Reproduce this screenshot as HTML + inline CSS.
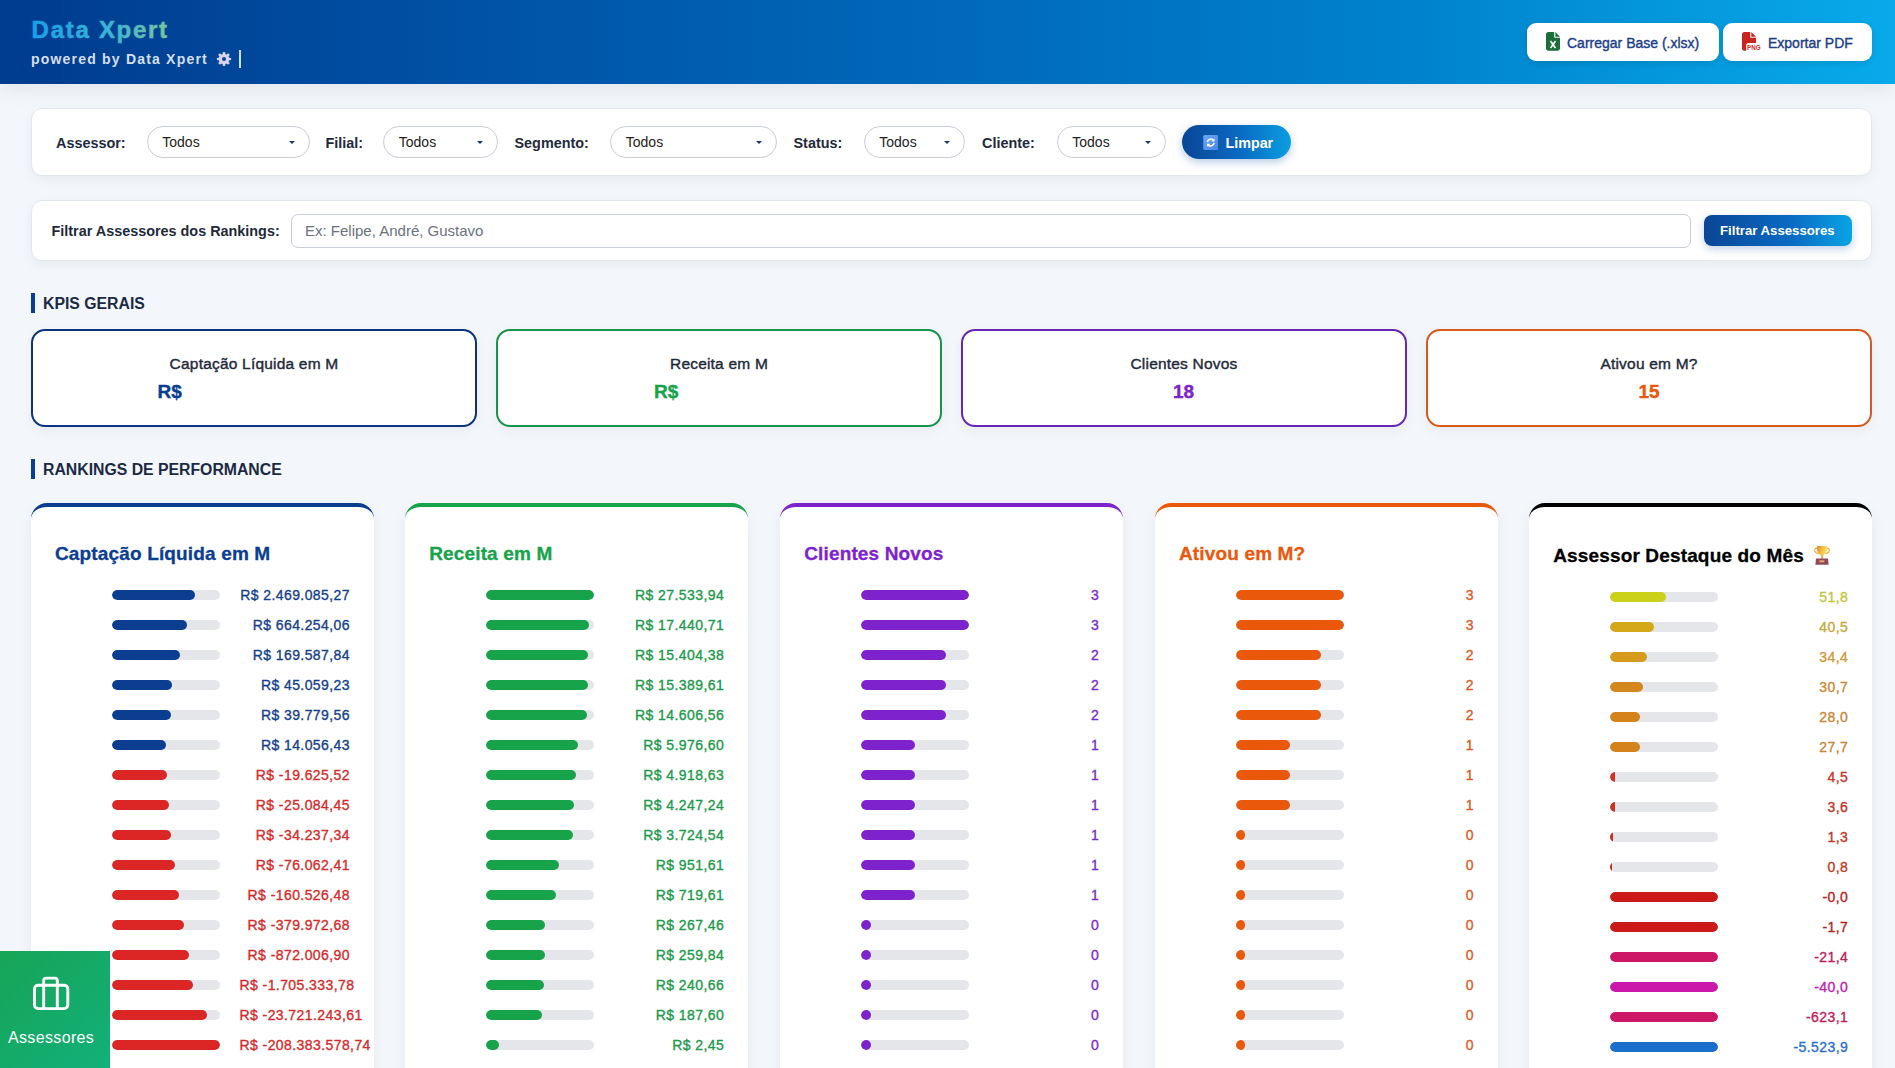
<!DOCTYPE html>
<html lang="pt-BR"><head><meta charset="utf-8"><title>Data Xpert</title>
<style>
*{box-sizing:border-box;margin:0;padding:0}
html,body{width:1895px;height:1068px;overflow:hidden}
body{font-family:"Liberation Sans", sans-serif;background:#f3f6fa;position:relative;color:#1f2937}
.abs{position:absolute}
.header{position:absolute;left:0;top:0;width:1895px;height:84px;
  background:linear-gradient(90deg,#003b8e 0%,#0052a6 25%,#0069b9 50%,#0083cc 75%,#08aaea 100%);
  box-shadow:0 3px 22px rgba(20,30,60,.09)}
.brand{position:absolute;left:31px;top:17px;font-size:24px;font-weight:bold;letter-spacing:1.8px;line-height:28px;
  background:linear-gradient(90deg,#1aa0e6 0%,#37b3d6 55%,#79c29a 100%);-webkit-background-clip:text;background-clip:text;color:transparent;white-space:nowrap}
.powered{position:absolute;left:31px;top:51px;font-size:14px;font-weight:bold;letter-spacing:1.2px;line-height:17px;color:#d5def0;white-space:nowrap}
.hbtn{position:absolute;top:23px;height:38px;background:#fff;border-radius:9px;box-shadow:0 2px 6px rgba(0,0,0,.12)}
.hbtn span{position:absolute;top:12px;font-size:14px;line-height:16px;color:#1e3f8a;-webkit-text-stroke:0.4px #1e3f8a;white-space:nowrap}
.card{position:absolute;background:#fff;border:1px solid #e3e7ee;border-radius:11px;box-shadow:0 4px 12px rgba(15,30,60,.05)}
.lbl{position:absolute;font-size:14.4px;font-weight:bold;color:#1f2a3a;line-height:16px;white-space:nowrap}
.sel{position:absolute;top:126px;height:32px;border:1px solid #c9ced6;border-radius:16px;background:#fff}
.sel span{position:absolute;top:7px;font-size:14px;line-height:16px;color:#222;white-space:nowrap}
.sel i{position:absolute;top:13.5px;width:0;height:0;border-left:3px solid transparent;border-right:3px solid transparent;border-top:3.5px solid #17356e}
.limpar{position:absolute;left:1182px;top:125px;width:109px;height:34px;border-radius:17px;
  background:linear-gradient(90deg,#0a4596 0%,#0a6cc4 55%,#0a9ee0 100%);box-shadow:0 3px 8px rgba(10,80,170,.3)}
.sec{position:absolute;left:31px;width:4px;height:20px;background:#0b3d91}
.sectitle{position:absolute;left:43px;font-size:15.8px;font-weight:bold;color:#1b2a44;line-height:18px;white-space:nowrap}
.kpi{position:absolute;top:329px;width:446px;height:98px;background:#fff;border:2px solid;border-radius:14px;box-shadow:0 4px 12px rgba(15,30,60,.05)}
.kpi .t{position:absolute;top:24px;left:0;width:100%;text-align:center;font-size:15.5px;letter-spacing:0.2px;line-height:18px;color:#1f2a3a;white-space:nowrap;-webkit-text-stroke:0.4px #1f2a3a}
.kpi .v{position:absolute;top:49.8px;font-size:19px;font-weight:bold;line-height:22px;white-space:nowrap;-webkit-text-stroke:0.4px currentColor}
.rc{position:absolute;top:503px;width:343px;height:600px;background:#fff;border-radius:16px;border-top:4px solid;box-shadow:0 4px 14px rgba(15,30,60,.06)}
.rc .tt{position:absolute;left:24px;top:35.5px;letter-spacing:0.15px;-webkit-text-stroke:0.3px currentColor;font-size:19px;font-weight:bold;line-height:22px;white-space:nowrap}
.row{position:absolute;left:0;width:343px;height:20px}
.track{position:absolute;left:81px;top:0;width:108px;height:10px;border-radius:5px;background:#e4e6ea;overflow:hidden}
.fill{position:absolute;left:0;top:0;height:10px;border-radius:5px}
.val{position:absolute;right:24px;top:-3px;font-size:14px;line-height:16px;letter-spacing:0.42px;white-space:nowrap;text-align:right;-webkit-text-stroke:0.35px currentColor}
.widget{position:absolute;left:0;top:951px;width:110px;height:117px;background:linear-gradient(135deg,#17a456 0%,#12b07a 100%)}
</style></head><body>
<div class="header">
<svg class="abs" style="left:30px;top:14px;overflow:visible" width="145" height="32" viewBox="0 0 145 32"><defs><linearGradient id="brg" gradientUnits="userSpaceOnUse" x1="2" y1="0" x2="138" y2="0"><stop offset="0" stop-color="#18a0e8"/><stop offset="0.55" stop-color="#38b4d6"/><stop offset="1" stop-color="#7cc49a"/></linearGradient></defs><text x="1.6" y="24.2" font-family="Liberation Sans" font-weight="bold" font-size="24" letter-spacing="1.72" fill="url(#brg)" stroke="url(#brg)" stroke-width="0.5">Data Xpert</text></svg>
<div class="powered">powered by Data Xpert</div>
<svg class="abs" style="left:215.8px;top:50.8px" width="16" height="16" viewBox="0 0 16 16"><defs><mask id="gm"><rect width="16" height="16" fill="#fff"/><circle cx="8" cy="8" r="2" fill="#000"/></mask></defs><g fill="#d9d2ee" mask="url(#gm)"><circle cx="8" cy="8" r="5.3"/><rect x="6.7" y="0.9" width="2.6" height="3.4" rx="0.8" transform="rotate(0 8 8)"/><rect x="6.7" y="0.9" width="2.6" height="3.4" rx="0.8" transform="rotate(45 8 8)"/><rect x="6.7" y="0.9" width="2.6" height="3.4" rx="0.8" transform="rotate(90 8 8)"/><rect x="6.7" y="0.9" width="2.6" height="3.4" rx="0.8" transform="rotate(135 8 8)"/><rect x="6.7" y="0.9" width="2.6" height="3.4" rx="0.8" transform="rotate(180 8 8)"/><rect x="6.7" y="0.9" width="2.6" height="3.4" rx="0.8" transform="rotate(225 8 8)"/><rect x="6.7" y="0.9" width="2.6" height="3.4" rx="0.8" transform="rotate(270 8 8)"/><rect x="6.7" y="0.9" width="2.6" height="3.4" rx="0.8" transform="rotate(315 8 8)"/></g></svg>
<div class="abs" style="left:239.2px;top:50px;width:2.2px;height:18px;background:#cfe0f8"></div>
<div class="hbtn" style="left:1527px;width:192px">
<svg class="abs" style="left:19px;top:9px" width="14" height="18.7" viewBox="0 0 384 512"><path fill="#1d6f3a" d="M0 64C0 28.7 28.7 0 64 0H224V128c0 17.7 14.3 32 32 32H384V448c0 35.3-28.7 64-64 64H64c-35.3 0-64-28.7-64-64V64zM384 128H256V0L384 128z"/><path fill="#fff" d="M155.7 250.2L192 302.1l36.3-51.9c7.6-10.9 22.6-13.5 33.4-5.9s13.5 22.6 5.9 33.4L221.3 344l46.4 66.2c7.6 10.9 5 25.8-5.9 33.4s-25.8 5-33.4-5.9L192 385.8l-36.3 51.9c-7.6 10.9-22.6 13.5-33.4 5.9s-13.5-22.6-5.9-33.4L162.7 344l-46.4-66.2c-7.6-10.9-5-25.8 5.9-33.4s25.8-5 33.4 5.9z"/></svg>
<span style="left:40px">Carregar Base (.xlsx)</span></div>
<div class="hbtn" style="left:1723px;width:149px">
<svg class="abs" style="left:19px;top:9px" width="18.7" height="18.7" viewBox="0 0 512 512"><path fill="#c9241e" d="M0 64C0 28.7 28.7 0 64 0H224V128c0 17.7 14.3 32 32 32H384V304H176c-35.3 0-64 28.7-64 64V512H64c-35.3 0-64-28.7-64-64V64zM384 128H256V0L384 128z"/><text x="140" y="505" font-family="Liberation Sans" font-weight="bold" font-size="190" fill="#c9241e" textLength="370" lengthAdjust="spacingAndGlyphs">PNG</text></svg>
<span style="left:45px">Exportar PDF</span></div>
</div>
<div class="card" style="left:31px;top:108px;width:1841px;height:68px"></div>
<div class="lbl" style="left:56px;top:135px">Assessor:</div>
<div class="lbl" style="left:325.5px;top:135px">Filial:</div>
<div class="lbl" style="left:514.5px;top:135px">Segmento:</div>
<div class="lbl" style="left:793.5px;top:135px">Status:</div>
<div class="lbl" style="left:982px;top:135px">Cliente:</div>
<div class="sel" style="left:146.5px;width:163px"><span style="left:14.8px">Todos</span><i style="left:141px"></i></div>
<div class="sel" style="left:383px;width:114.5px"><span style="left:14.8px">Todos</span><i style="left:92.5px"></i></div>
<div class="sel" style="left:610px;width:166.5px"><span style="left:14.8px">Todos</span><i style="left:144.5px"></i></div>
<div class="sel" style="left:863.5px;width:101.5px"><span style="left:14.8px">Todos</span><i style="left:79.5px"></i></div>
<div class="sel" style="left:1056.5px;width:109px"><span style="left:14.8px">Todos</span><i style="left:87px"></i></div>
<div class="limpar">
<svg class="abs" style="left:20.5px;top:10px" width="15.5" height="15" viewBox="0 0 16 16"><defs><linearGradient id="lg1" x1="0" y1="0" x2="1" y2="1"><stop offset="0" stop-color="#6aa8f4"/><stop offset="1" stop-color="#4a86e4"/></linearGradient></defs><rect x="0" y="0" width="16" height="16" rx="1.6" fill="url(#lg1)"/><path d="M4.4 7.6A3.7 3.7 0 0 1 11.1 5.9" stroke="#fff" stroke-width="1.7" fill="none"/><path d="M12 3.4v3.4H8.6z" fill="#fff"/><path d="M11.6 8.4A3.7 3.7 0 0 1 4.9 10.1" stroke="#fff" stroke-width="1.7" fill="none"/><path d="M4 12.6V9.2H7.4z" fill="#fff"/></svg>
<div class="abs" style="left:43.5px;top:9.5px;font-size:14.3px;font-weight:bold;color:#fff;line-height:17px">Limpar</div>
</div>
<div class="card" style="left:31px;top:200px;width:1841px;height:61px"></div>
<div class="lbl" style="left:51.5px;top:223px">Filtrar Assessores dos Rankings:</div>
<div class="abs" style="left:291px;top:214px;width:1400px;height:34px;border:1px solid #c9ced6;border-radius:7px;background:#fff"></div>
<div class="abs" style="left:305px;top:222px;font-size:15px;line-height:17px;color:#6b7280;white-space:nowrap">Ex: Felipe, André, Gustavo</div>
<div class="abs" style="left:1704px;top:215px;width:148px;height:31px;border-radius:8px;background:linear-gradient(90deg,#0a4596 0%,#0a6cc4 60%,#0aa3e4 100%);box-shadow:0 3px 8px rgba(10,80,170,.25)"></div>
<div class="abs" style="left:1720px;top:223px;font-size:13.2px;font-weight:bold;line-height:15px;color:#fff;white-space:nowrap">Filtrar Assessores</div>
<div class="sec" style="top:293px"></div><div class="sectitle" style="top:294.5px">KPIS GERAIS</div>
<div class="sec" style="top:459px"></div><div class="sectitle" style="top:460.5px">RANKINGS DE PERFORMANCE</div>
<div class="kpi" style="left:31px;border-color:#0a3380"><div class="t">Captação Líquida em M</div><div class="v" style="left:124.5px;color:#0b3d91">R$</div></div>
<div class="kpi" style="left:496px;border-color:#17944a"><div class="t">Receita em M</div><div class="v" style="left:156px;color:#16a34a">R$</div></div>
<div class="kpi" style="left:961px;border-color:#6a26b0"><div class="t">Clientes Novos</div><div class="v" style="left:210px;color:#7e22ce">18</div></div>
<div class="kpi" style="left:1426px;border-color:#d65a1c"><div class="t">Ativou em M?</div><div class="v" style="left:210.5px;color:#ea580c">15</div></div>
<div class="rc" style="left:31px;border-top-color:#0b3d91">
<div class="tt" style="color:#0b3d91">Captação Líquida em M</div>
<div class="row" style="top:83px"><div class="track"><div class="fill" style="width:83px;background:#0b3d91;border-radius:5px"></div></div><div class="val" style="color:#163f8c;">R$ 2.469.085,27</div></div>
<div class="row" style="top:113px"><div class="track"><div class="fill" style="width:75px;background:#0b3d91;border-radius:5px"></div></div><div class="val" style="color:#163f8c;">R$ 664.254,06</div></div>
<div class="row" style="top:143px"><div class="track"><div class="fill" style="width:68px;background:#0b3d91;border-radius:5px"></div></div><div class="val" style="color:#163f8c;">R$ 169.587,84</div></div>
<div class="row" style="top:173px"><div class="track"><div class="fill" style="width:60px;background:#0b3d91;border-radius:5px"></div></div><div class="val" style="color:#163f8c;">R$ 45.059,23</div></div>
<div class="row" style="top:203px"><div class="track"><div class="fill" style="width:59px;background:#0b3d91;border-radius:5px"></div></div><div class="val" style="color:#163f8c;">R$ 39.779,56</div></div>
<div class="row" style="top:233px"><div class="track"><div class="fill" style="width:54px;background:#0b3d91;border-radius:5px"></div></div><div class="val" style="color:#163f8c;">R$ 14.056,43</div></div>
<div class="row" style="top:263px"><div class="track"><div class="fill" style="width:55px;background:#dc2626;border-radius:5px"></div></div><div class="val" style="color:#d42c2c;">R$ -19.625,52</div></div>
<div class="row" style="top:293px"><div class="track"><div class="fill" style="width:57px;background:#dc2626;border-radius:5px"></div></div><div class="val" style="color:#d42c2c;">R$ -25.084,45</div></div>
<div class="row" style="top:323px"><div class="track"><div class="fill" style="width:59px;background:#dc2626;border-radius:5px"></div></div><div class="val" style="color:#d42c2c;">R$ -34.237,34</div></div>
<div class="row" style="top:353px"><div class="track"><div class="fill" style="width:63px;background:#dc2626;border-radius:5px"></div></div><div class="val" style="color:#d42c2c;">R$ -76.062,41</div></div>
<div class="row" style="top:383px"><div class="track"><div class="fill" style="width:67px;background:#dc2626;border-radius:5px"></div></div><div class="val" style="color:#d42c2c;">R$ -160.526,48</div></div>
<div class="row" style="top:413px"><div class="track"><div class="fill" style="width:72px;background:#dc2626;border-radius:5px"></div></div><div class="val" style="color:#d42c2c;">R$ -379.972,68</div></div>
<div class="row" style="top:443px"><div class="track"><div class="fill" style="width:77px;background:#dc2626;border-radius:5px"></div></div><div class="val" style="color:#d42c2c;">R$ -872.006,90</div></div>
<div class="row" style="top:473px"><div class="track"><div class="fill" style="width:81px;background:#dc2626;border-radius:5px"></div></div><div class="val" style="color:#d42c2c;left:208.5px;right:auto;text-align:left">R$ -1.705.333,78</div></div>
<div class="row" style="top:503px"><div class="track"><div class="fill" style="width:95px;background:#dc2626;border-radius:5px"></div></div><div class="val" style="color:#d42c2c;left:208.5px;right:auto;text-align:left">R$ -23.721.243,61</div></div>
<div class="row" style="top:533px"><div class="track"><div class="fill" style="width:108px;background:#dc2626;border-radius:5px"></div></div><div class="val" style="color:#d42c2c;left:208.5px;right:auto;text-align:left">R$ -208.383.578,74</div></div>
</div>
<div class="rc" style="left:405.2px;border-top-color:#16a34a">
<div class="tt" style="color:#16a34a">Receita em M</div>
<div class="row" style="top:83px"><div class="track"><div class="fill" style="width:108px;background:#16a34a;border-radius:5px"></div></div><div class="val" style="color:#22994c;">R$ 27.533,94</div></div>
<div class="row" style="top:113px"><div class="track"><div class="fill" style="width:103px;background:#16a34a;border-radius:5px"></div></div><div class="val" style="color:#22994c;">R$ 17.440,71</div></div>
<div class="row" style="top:143px"><div class="track"><div class="fill" style="width:102px;background:#16a34a;border-radius:5px"></div></div><div class="val" style="color:#22994c;">R$ 15.404,38</div></div>
<div class="row" style="top:173px"><div class="track"><div class="fill" style="width:102px;background:#16a34a;border-radius:5px"></div></div><div class="val" style="color:#22994c;">R$ 15.389,61</div></div>
<div class="row" style="top:203px"><div class="track"><div class="fill" style="width:101px;background:#16a34a;border-radius:5px"></div></div><div class="val" style="color:#22994c;">R$ 14.606,56</div></div>
<div class="row" style="top:233px"><div class="track"><div class="fill" style="width:92px;background:#16a34a;border-radius:5px"></div></div><div class="val" style="color:#22994c;">R$ 5.976,60</div></div>
<div class="row" style="top:263px"><div class="track"><div class="fill" style="width:90px;background:#16a34a;border-radius:5px"></div></div><div class="val" style="color:#22994c;">R$ 4.918,63</div></div>
<div class="row" style="top:293px"><div class="track"><div class="fill" style="width:88px;background:#16a34a;border-radius:5px"></div></div><div class="val" style="color:#22994c;">R$ 4.247,24</div></div>
<div class="row" style="top:323px"><div class="track"><div class="fill" style="width:87px;background:#16a34a;border-radius:5px"></div></div><div class="val" style="color:#22994c;">R$ 3.724,54</div></div>
<div class="row" style="top:353px"><div class="track"><div class="fill" style="width:73px;background:#16a34a;border-radius:5px"></div></div><div class="val" style="color:#22994c;">R$ 951,61</div></div>
<div class="row" style="top:383px"><div class="track"><div class="fill" style="width:70px;background:#16a34a;border-radius:5px"></div></div><div class="val" style="color:#22994c;">R$ 719,61</div></div>
<div class="row" style="top:413px"><div class="track"><div class="fill" style="width:59px;background:#16a34a;border-radius:5px"></div></div><div class="val" style="color:#22994c;">R$ 267,46</div></div>
<div class="row" style="top:443px"><div class="track"><div class="fill" style="width:59px;background:#16a34a;border-radius:5px"></div></div><div class="val" style="color:#22994c;">R$ 259,84</div></div>
<div class="row" style="top:473px"><div class="track"><div class="fill" style="width:58px;background:#16a34a;border-radius:5px"></div></div><div class="val" style="color:#22994c;">R$ 240,66</div></div>
<div class="row" style="top:503px"><div class="track"><div class="fill" style="width:56px;background:#16a34a;border-radius:5px"></div></div><div class="val" style="color:#22994c;">R$ 187,60</div></div>
<div class="row" style="top:533px"><div class="track"><div class="fill" style="width:13px;background:#16a34a;border-radius:5px"></div></div><div class="val" style="color:#22994c;">R$ 2,45</div></div>
</div>
<div class="rc" style="left:780.2px;border-top-color:#7e22ce">
<div class="tt" style="color:#7e22ce">Clientes Novos</div>
<div class="row" style="top:83px"><div class="track"><div class="fill" style="width:108px;background:#7e22ce;border-radius:5px"></div></div><div class="val" style="color:#7a2cc8;">3</div></div>
<div class="row" style="top:113px"><div class="track"><div class="fill" style="width:108px;background:#7e22ce;border-radius:5px"></div></div><div class="val" style="color:#7a2cc8;">3</div></div>
<div class="row" style="top:143px"><div class="track"><div class="fill" style="width:85px;background:#7e22ce;border-radius:5px"></div></div><div class="val" style="color:#7a2cc8;">2</div></div>
<div class="row" style="top:173px"><div class="track"><div class="fill" style="width:85px;background:#7e22ce;border-radius:5px"></div></div><div class="val" style="color:#7a2cc8;">2</div></div>
<div class="row" style="top:203px"><div class="track"><div class="fill" style="width:85px;background:#7e22ce;border-radius:5px"></div></div><div class="val" style="color:#7a2cc8;">2</div></div>
<div class="row" style="top:233px"><div class="track"><div class="fill" style="width:54px;background:#7e22ce;border-radius:5px"></div></div><div class="val" style="color:#7a2cc8;">1</div></div>
<div class="row" style="top:263px"><div class="track"><div class="fill" style="width:54px;background:#7e22ce;border-radius:5px"></div></div><div class="val" style="color:#7a2cc8;">1</div></div>
<div class="row" style="top:293px"><div class="track"><div class="fill" style="width:54px;background:#7e22ce;border-radius:5px"></div></div><div class="val" style="color:#7a2cc8;">1</div></div>
<div class="row" style="top:323px"><div class="track"><div class="fill" style="width:54px;background:#7e22ce;border-radius:5px"></div></div><div class="val" style="color:#7a2cc8;">1</div></div>
<div class="row" style="top:353px"><div class="track"><div class="fill" style="width:54px;background:#7e22ce;border-radius:5px"></div></div><div class="val" style="color:#7a2cc8;">1</div></div>
<div class="row" style="top:383px"><div class="track"><div class="fill" style="width:54px;background:#7e22ce;border-radius:5px"></div></div><div class="val" style="color:#7a2cc8;">1</div></div>
<div class="row" style="top:413px"><div class="track"><div class="fill" style="width:9.5px;background:#7e22ce;border-radius:5px"></div></div><div class="val" style="color:#7a2cc8;">0</div></div>
<div class="row" style="top:443px"><div class="track"><div class="fill" style="width:9.5px;background:#7e22ce;border-radius:5px"></div></div><div class="val" style="color:#7a2cc8;">0</div></div>
<div class="row" style="top:473px"><div class="track"><div class="fill" style="width:9.5px;background:#7e22ce;border-radius:5px"></div></div><div class="val" style="color:#7a2cc8;">0</div></div>
<div class="row" style="top:503px"><div class="track"><div class="fill" style="width:9.5px;background:#7e22ce;border-radius:5px"></div></div><div class="val" style="color:#7a2cc8;">0</div></div>
<div class="row" style="top:533px"><div class="track"><div class="fill" style="width:9.5px;background:#7e22ce;border-radius:5px"></div></div><div class="val" style="color:#7a2cc8;">0</div></div>
</div>
<div class="rc" style="left:1155px;border-top-color:#ea580c">
<div class="tt" style="color:#ea580c">Ativou em M?</div>
<div class="row" style="top:83px"><div class="track"><div class="fill" style="width:108px;background:#ea580c;border-radius:5px"></div></div><div class="val" style="color:#dc5a1e;">3</div></div>
<div class="row" style="top:113px"><div class="track"><div class="fill" style="width:108px;background:#ea580c;border-radius:5px"></div></div><div class="val" style="color:#dc5a1e;">3</div></div>
<div class="row" style="top:143px"><div class="track"><div class="fill" style="width:85px;background:#ea580c;border-radius:5px"></div></div><div class="val" style="color:#dc5a1e;">2</div></div>
<div class="row" style="top:173px"><div class="track"><div class="fill" style="width:85px;background:#ea580c;border-radius:5px"></div></div><div class="val" style="color:#dc5a1e;">2</div></div>
<div class="row" style="top:203px"><div class="track"><div class="fill" style="width:85px;background:#ea580c;border-radius:5px"></div></div><div class="val" style="color:#dc5a1e;">2</div></div>
<div class="row" style="top:233px"><div class="track"><div class="fill" style="width:54px;background:#ea580c;border-radius:5px"></div></div><div class="val" style="color:#dc5a1e;">1</div></div>
<div class="row" style="top:263px"><div class="track"><div class="fill" style="width:54px;background:#ea580c;border-radius:5px"></div></div><div class="val" style="color:#dc5a1e;">1</div></div>
<div class="row" style="top:293px"><div class="track"><div class="fill" style="width:54px;background:#ea580c;border-radius:5px"></div></div><div class="val" style="color:#dc5a1e;">1</div></div>
<div class="row" style="top:323px"><div class="track"><div class="fill" style="width:8.5px;background:#ea580c;border-radius:5px"></div></div><div class="val" style="color:#dc5a1e;">0</div></div>
<div class="row" style="top:353px"><div class="track"><div class="fill" style="width:8.5px;background:#ea580c;border-radius:5px"></div></div><div class="val" style="color:#dc5a1e;">0</div></div>
<div class="row" style="top:383px"><div class="track"><div class="fill" style="width:8.5px;background:#ea580c;border-radius:5px"></div></div><div class="val" style="color:#dc5a1e;">0</div></div>
<div class="row" style="top:413px"><div class="track"><div class="fill" style="width:8.5px;background:#ea580c;border-radius:5px"></div></div><div class="val" style="color:#dc5a1e;">0</div></div>
<div class="row" style="top:443px"><div class="track"><div class="fill" style="width:8.5px;background:#ea580c;border-radius:5px"></div></div><div class="val" style="color:#dc5a1e;">0</div></div>
<div class="row" style="top:473px"><div class="track"><div class="fill" style="width:8.5px;background:#ea580c;border-radius:5px"></div></div><div class="val" style="color:#dc5a1e;">0</div></div>
<div class="row" style="top:503px"><div class="track"><div class="fill" style="width:8.5px;background:#ea580c;border-radius:5px"></div></div><div class="val" style="color:#dc5a1e;">0</div></div>
<div class="row" style="top:533px"><div class="track"><div class="fill" style="width:8.5px;background:#ea580c;border-radius:5px"></div></div><div class="val" style="color:#dc5a1e;">0</div></div>
</div>
<div class="rc" style="left:1529.2px;border-top-color:#000">
<div class="tt" style="top:38px;color:#000">Assessor Destaque do Mês</div>
<svg class="abs" style="left:275.6px;top:33px" width="35" height="30" viewBox="0 0 35 30"><defs><linearGradient id="cupg" x1="0" y1="0" x2="1" y2="0.3"><stop offset="0" stop-color="#e2882a"/><stop offset="0.6" stop-color="#f4c040"/><stop offset="1" stop-color="#f8e060"/></linearGradient></defs><path d="M12.3 8.2C9.6 7.6 9.2 10.6 10.4 12.2C11.2 13.3 12.6 13.6 13.4 13.8M21.7 8.2C24.4 7.6 24.8 10.6 23.6 12.2C22.8 13.3 21.4 13.6 20.6 13.8" stroke="#eaa838" stroke-width="1.1" fill="none"/><path d="M12.1 5.9H21.9V9.2C21.9 12.6 19.6 15.1 17 15.7C14.4 15.1 12.1 12.6 12.1 9.2Z" fill="url(#cupg)"/><rect x="16.1" y="15.4" width="1.8" height="3.3" fill="#e8a838"/><path d="M11 18.5H23L23.6 24.7H10.4Z" fill="#8e4a5c"/><rect x="14.4" y="20.3" width="5" height="2" fill="#e8a860"/></svg>
<div class="row" style="top:85px"><div class="track"><div class="fill" style="width:56px;background:#cad118;border-radius:5px"></div></div><div class="val" style="color:#bfc63c;">51,8</div></div>
<div class="row" style="top:115px"><div class="track"><div class="fill" style="width:44px;background:#d4a818;border-radius:5px"></div></div><div class="val" style="color:#c9a63a;">40,5</div></div>
<div class="row" style="top:145px"><div class="track"><div class="fill" style="width:37px;background:#d69a1c;border-radius:5px"></div></div><div class="val" style="color:#cc9a3a;">34,4</div></div>
<div class="row" style="top:175px"><div class="track"><div class="fill" style="width:33px;background:#d4881c;border-radius:5px"></div></div><div class="val" style="color:#c98a38;">30,7</div></div>
<div class="row" style="top:205px"><div class="track"><div class="fill" style="width:30px;background:#d4821c;border-radius:5px"></div></div><div class="val" style="color:#c98638;">28,0</div></div>
<div class="row" style="top:235px"><div class="track"><div class="fill" style="width:30px;background:#d4821c;border-radius:5px"></div></div><div class="val" style="color:#c98638;">27,7</div></div>
<div class="row" style="top:265px"><div class="track"><div class="fill" style="width:5px;background:#d8301e;border-radius:5px 0 0 5px"></div></div><div class="val" style="color:#c83228;">4,5</div></div>
<div class="row" style="top:295px"><div class="track"><div class="fill" style="width:4.5px;background:#d0301e;border-radius:5px 0 0 5px"></div></div><div class="val" style="color:#c43428;">3,6</div></div>
<div class="row" style="top:325px"><div class="track"><div class="fill" style="width:2.5px;background:#c8301e;border-radius:5px 0 0 5px"></div></div><div class="val" style="color:#c03a22;">1,3</div></div>
<div class="row" style="top:355px"><div class="track"><div class="fill" style="width:1.8px;background:#c0301e;border-radius:5px 0 0 5px"></div></div><div class="val" style="color:#bc3a22;">0,8</div></div>
<div class="row" style="top:385px"><div class="track"><div class="fill" style="width:108px;background:#cc1a1a;border-radius:5px"></div></div><div class="val" style="color:#b82222;">-0,0</div></div>
<div class="row" style="top:415px"><div class="track"><div class="fill" style="width:108px;background:#cc1a1a;border-radius:5px"></div></div><div class="val" style="color:#b82222;">-1,7</div></div>
<div class="row" style="top:445px"><div class="track"><div class="fill" style="width:108px;background:#cc1866;border-radius:5px"></div></div><div class="val" style="color:#c0205a;">-21,4</div></div>
<div class="row" style="top:475px"><div class="track"><div class="fill" style="width:108px;background:#cc18aa;border-radius:5px"></div></div><div class="val" style="color:#c020b0;">-40,0</div></div>
<div class="row" style="top:505px"><div class="track"><div class="fill" style="width:108px;background:#cc1866;border-radius:5px"></div></div><div class="val" style="color:#c0205a;">-623,1</div></div>
<div class="row" style="top:535px"><div class="track"><div class="fill" style="width:108px;background:#1a6ecc;border-radius:5px"></div></div><div class="val" style="color:#2a70c8;">-5.523,9</div></div>
</div>
<div class="widget">
<svg class="abs" style="left:31px;top:975px;position:absolute" width="40" height="38" viewBox="0 0 40 38"></svg>
</div>
<svg class="abs" style="left:31px;top:975px" width="40" height="38" viewBox="0 0 40 38"><rect x="3.5" y="10.3" width="33.3" height="23.3" rx="3.6" stroke="#fff" stroke-width="2.9" fill="none"/><path d="M12.7 33.6V5.6a2.5 2.5 0 0 1 2.5-2.5h8.6a2.5 2.5 0 0 1 2.5 2.5V33.6" stroke="#fff" stroke-width="2.9" fill="none"/></svg>
<div class="abs" style="left:8px;top:1029px;font-size:16px;line-height:18px;letter-spacing:0.35px;color:#fff;white-space:nowrap">Assessores</div>
</body></html>
